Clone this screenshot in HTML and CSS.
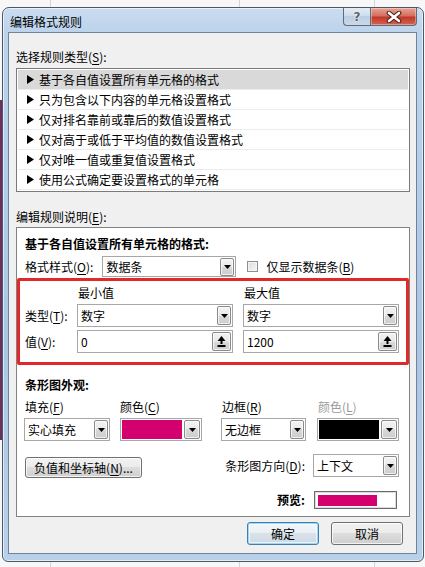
FILE: index.html
```html
<!DOCTYPE html>
<html lang="zh-CN">
<head>
<meta charset="utf-8">
<title>编辑格式规则</title>
<link rel="stylesheet" href="styles.css">
</head>
<body>
<div class="dialog">
  <div class="titlebar">
    <span class="title">编辑格式规则</span>
    <div class="caption">
      <div class="cap-help">?</div>
      <div class="cap-close">
        <svg width="16" height="12" viewBox="0 0 16 12"><path d="M3 2 L13 10 M13 2 L3 10" stroke="#4a1f18" stroke-width="4.6" stroke-linecap="round"/><path d="M3 2 L13 10 M13 2 L3 10" stroke="#fff" stroke-width="2.6" stroke-linecap="round"/></svg>
      </div>
    </div>
  </div>
  <div class="client">
    <div class="lbl lbl1">选择规则类型(<u>S</u>):</div>
    <ul class="listbox">
      <li class="sel"><svg class="tri" width="7" height="9" viewBox="0 0 7 9"><polygon points="0,0 7,4.5 0,9" fill="#000"/></svg>基于各自值设置所有单元格的格式</li>
      <li><svg class="tri" width="7" height="9" viewBox="0 0 7 9"><polygon points="0,0 7,4.5 0,9" fill="#000"/></svg>只为包含以下内容的单元格设置格式</li>
      <li><svg class="tri" width="7" height="9" viewBox="0 0 7 9"><polygon points="0,0 7,4.5 0,9" fill="#000"/></svg>仅对排名靠前或靠后的数值设置格式</li>
      <li><svg class="tri" width="7" height="9" viewBox="0 0 7 9"><polygon points="0,0 7,4.5 0,9" fill="#000"/></svg>仅对高于或低于平均值的数值设置格式</li>
      <li><svg class="tri" width="7" height="9" viewBox="0 0 7 9"><polygon points="0,0 7,4.5 0,9" fill="#000"/></svg>仅对唯一值或重复值设置格式</li>
      <li><svg class="tri" width="7" height="9" viewBox="0 0 7 9"><polygon points="0,0 7,4.5 0,9" fill="#000"/></svg>使用公式确定要设置格式的单元格</li>
    </ul>
    <div class="lbl lbl2">编辑规则说明(<u>E</u>):</div>
    <div class="desc">
      <div class="d-title bold">基于各自值设置所有单元格的格式:</div>
      <div class="style-row">
        <span>格式样式(<u>O</u>):</span>
        <div class="combo combo-style"><span>数据条</span><span class="dd"><svg width="7" height="4" viewBox="0 0 7 4"><polygon points="0,0 7,0 3.5,4" fill="#000"/></svg></span></div>
        <span class="check"></span>
        <span class="check-lbl">仅显示数据条(<u>B</u>)</span>
      </div>
      <div class="redbox">
        <span></span>
        <span class="hdr">最小值</span>
        <span class="hdr">最大值</span>
        <span>类型(<u>T</u>):</span>
        <div class="combo"><span>数字</span><span class="dd"><svg width="7" height="4" viewBox="0 0 7 4"><polygon points="0,0 7,0 3.5,4" fill="#000"/></svg></span></div>
        <div class="combo"><span>数字</span><span class="dd"><svg width="7" height="4" viewBox="0 0 7 4"><polygon points="0,0 7,0 3.5,4" fill="#000"/></svg></span></div>
        <span>值(<u>V</u>):</span>
        <div class="combo"><span>0</span><span class="up"><svg width="9" height="11" viewBox="0 0 9 11"><polygon points="4.5,0 8.5,5 0.5,5" fill="#000"/><rect x="3.5" y="4.5" width="2" height="3.5" fill="#000"/><rect x="0.5" y="9" width="8" height="2" fill="#000"/></svg></span></div>
        <div class="combo"><span>1200</span><span class="up"><svg width="9" height="11" viewBox="0 0 9 11"><polygon points="4.5,0 8.5,5 0.5,5" fill="#000"/><rect x="3.5" y="4.5" width="2" height="3.5" fill="#000"/><rect x="0.5" y="9" width="8" height="2" fill="#000"/></svg></span></div>
      </div>
      <div class="sec-title bold">条形图外观:</div>
      <div class="app-grid">
        <span class="alb">填充(<u>F</u>)</span>
        <span class="alb c2">颜色(<u>C</u>)</span>
        <span class="alb">边框(<u>R</u>)</span>
        <span class="alb gray">颜色(<u>L</u>)</span>
        <div class="combo w86"><span>实心填充</span><span class="dd"><svg width="7" height="4" viewBox="0 0 7 4"><polygon points="0,0 7,0 3.5,4" fill="#000"/></svg></span></div>
        <div class="combo color w82"><span class="swatch magenta"></span><span class="dd"><svg width="7" height="4" viewBox="0 0 7 4"><polygon points="0,0 7,0 3.5,4" fill="#000"/></svg></span></div>
        <div class="combo w85"><span>无边框</span><span class="dd"><svg width="7" height="4" viewBox="0 0 7 4"><polygon points="0,0 7,0 3.5,4" fill="#000"/></svg></span></div>
        <div class="combo color w82"><span class="swatch black"></span><span class="dd"><svg width="7" height="4" viewBox="0 0 7 4"><polygon points="0,0 7,0 3.5,4" fill="#000"/></svg></span></div>
      </div>
      <div class="axis-row">
        <div class="btn axis-btn">负值和坐标轴(<u>N</u>)...</div>
        <div class="dir">
          <span>条形图方向(<u>D</u>):</span>
          <div class="combo w86"><span>上下文</span><span class="dd"><svg width="7" height="4" viewBox="0 0 7 4"><polygon points="0,0 7,0 3.5,4" fill="#000"/></svg></span></div>
        </div>
      </div>
      <div class="preview-row">
        <span class="bold">预览:</span>
        <div class="preview"><span class="pbar"></span></div>
      </div>
    </div>
    <div class="btn-row">
      <div class="btn default">确定</div>
      <div class="btn">取消</div>
    </div>
  </div>
</div>
</body>
</html>
```
FILE: styles.css
```css
* { box-sizing: border-box; }
html, body { margin: 0; padding: 0; }
body {
  width: 425px;
  height: 567px;
  overflow: hidden;
  white-space: nowrap;
  padding: 7px 1px 0 2px;
  font-family: "Noto Sans CJK SC", "Noto Sans", sans-serif;
  font-size: 12px;
  line-height: 16px;
  color: #000;
  background:
    linear-gradient(#6a2f63, #6a2f63) 0 100px / 3px 340px no-repeat,
    linear-gradient(#d4d4d4, #d4d4d4) 50px 0 / 1px 100% no-repeat,
    linear-gradient(#d4d4d4, #d4d4d4) 239px 0 / 1px 100% no-repeat,
    linear-gradient(#d4d4d4, #d4d4d4) 374px 0 / 1px 100% no-repeat,
    #f7f7f7;
}
u { text-decoration: underline; text-underline-offset: 2px; }
.bold { font-weight: bold; }

.dialog {
  width: 422px;
  height: 555px;
  border: 1px solid #4b5866;
  border-radius: 7px 7px 6px 6px;
  background: linear-gradient(180deg, #cadcef 0, #bcd3ec 24px, #aac5e3 60%, #b9d0ea 100%);
  box-shadow: inset 0 0 0 1px rgba(255,255,255,0.6);
  display: flex;
  flex-direction: column;
  padding: 0 6px 7px 5px;
}
.titlebar {
  height: 24px;
  flex: none;
  display: flex;
  justify-content: space-between;
  align-items: flex-start;
  padding-left: 2px;
}
.title { margin-top: 6px; }
.caption { display: flex; }
.cap-help, .cap-close {
  height: 18px;
  border: 1px solid #5f6b78;
  border-top: none;
  display: flex;
  align-items: center;
  justify-content: center;
}
.cap-help {
  width: 27px;
  border-radius: 0 0 0 4px;
  border-right: none;
  background: linear-gradient(#e4ecf5, #cddbea 50%, #bccee3 50%, #c9d9ea);
  color: #59636e;
  font-family: "DejaVu Sans", sans-serif;
  font-weight: bold;
  font-size: 12px;
  text-shadow: 0 0 2px #fff, 0 0 1px #fff;
}
.cap-close {
  width: 47px;
  border-radius: 0 0 4px 0;
  background: linear-gradient(#e8a395, #d5705f 45%, #c0392a 55%, #d4634f);
  box-shadow: inset 0 0 0 1px rgba(255,255,255,0.35);
}

.client {
  flex: 1;
  border: 1px solid #6f8399;
  background: #f0f0f0;
  padding: 0 6px 0 7px;
  display: flex;
  flex-direction: column;
}
.lbl1 { margin-top: 16px; }
.lbl2 { margin-top: 17px; }

.listbox {
  list-style: none;
  margin: 3px 0 0;
  padding: 1px;
  height: 124px;
  border: 1px solid #7a7a7a;
  background: #fff;
}
.listbox li {
  height: 20px;
  display: flex;
  align-items: center;
  border-bottom: 1px solid #ececec;
  padding-left: 9px;
}
.listbox li.sel { background: #d9d9d9; }
.tri { margin-right: 5px; flex: none; }

.desc {
  margin-top: 2px;
  height: 290px;
  border: 1px solid #828282;
  background: #fff;
  display: flex;
  flex-direction: column;
}
.d-title { margin-top: 8px; padding-left: 8px; }

.combo {
  height: 23px;
  border: 1px solid #a7a7a7;
  background: #fff;
  display: flex;
  align-items: center;
  justify-content: space-between;
  padding: 0 1px 0 3px;
}
.dd, .up {
  height: 19px;
  border: 1px solid #8a8a8a;
  border-radius: 2px;
  background: linear-gradient(#f4f4f4, #e8e8e8 50%, #d9d9d9 50%, #cdcdcd);
  box-shadow: inset 0 0 0 1px rgba(255,255,255,0.7);
  display: flex;
  align-items: center;
  justify-content: center;
}
.dd { width: 14px; }
.up { width: 19px; }

.style-row {
  margin-top: 4px;
  padding-left: 8px;
  display: flex;
  align-items: center;
  height: 21px;
}
.combo-style {
  width: 134px;
  height: 21px;
  margin-left: 9px;
}
.combo-style .dd { height: 18px; }
.check {
  width: 11px;
  height: 11px;
  margin-left: 11px;
  border: 1px solid #8e8f8f;
  background: linear-gradient(135deg, #dcdcdc, #f7f7f7);
  box-shadow: inset 0 0 0 1px #f4f4f4;
}
.check-lbl { margin-left: 8px; }

.redbox {
  margin-top: 1px;
  border: 3px solid #e3282a;
  border-radius: 2px;
  padding: 4px 8px 9px 5px;
  display: grid;
  grid-template-columns: 42px 156px 156px;
  grid-template-rows: 16px 23px 23px;
  column-gap: 10px;
  row-gap: 3px;
  align-items: center;
}
.hdr { padding-left: 1px; }

.sec-title { margin-top: 12px; padding-left: 8px; }
.app-grid {
  margin-top: 6px;
  padding-left: 7px;
  display: grid;
  grid-template-columns: 96px 101px 96px 82px;
  grid-template-rows: 16px 23px;
  row-gap: 3px;
}
.alb { padding-left: 1px; }
.alb.c2 { padding-left: 0; }
.gray { color: #9b9b9b; }
.w86 { width: 86px; }
.w82 { width: 82px; }
.w85 { width: 85px; }
.combo.color { padding: 0 1px 0 1px; }
.swatch { width: 60px; height: 19px; }
.magenta { background: #d5006f; }
.black { background: #000; }
.combo.color .dd { width: 16px; }

.axis-row {
  margin-top: 13px;
  height: 24px;
  padding: 0 10px 0 8px;
  display: flex;
  justify-content: space-between;
  align-items: flex-start;
}
.btn {
  height: 22px;
  border: 1px solid #707070;
  border-radius: 3px;
  background: linear-gradient(#f2f2f2, #ebebeb 50%, #dddddd 50%, #cfcfcf);
  box-shadow: inset 0 0 0 1px rgba(255,255,255,0.75);
  display: flex;
  align-items: center;
  justify-content: center;
}
.axis-btn { width: 117px; height: 21px; margin-top: 3px; }
.dir { display: flex; align-items: center; gap: 8px; }

.preview-row {
  margin-top: 13px;
  padding-right: 12px;
  display: flex;
  justify-content: flex-end;
  align-items: center;
  gap: 9px;
}
.preview {
  width: 83px;
  height: 18px;
  border: 1px solid #6a6a6a;
  box-shadow: inset 0 0 0 1px #dcdcdc;
  background: #fff;
  padding: 3px;
  display: flex;
}
.pbar { width: 59px; height: 11px; background: #d5006f; }

.btn-row {
  margin-top: 5px;
  padding-right: 7px;
  display: flex;
  justify-content: flex-end;
  gap: 12px;
}
.btn-row .btn { width: 72px; height: 23px; }
.btn.default {
  border-color: #3c7fb1;
  box-shadow: inset 0 0 0 1px #9fd6f3, inset 0 0 0 2px rgba(255,255,255,0.6);
  background: linear-gradient(#f1f6fa, #e9eff4 50%, #d9e2ea 50%, #cfd9e2);
}
```
